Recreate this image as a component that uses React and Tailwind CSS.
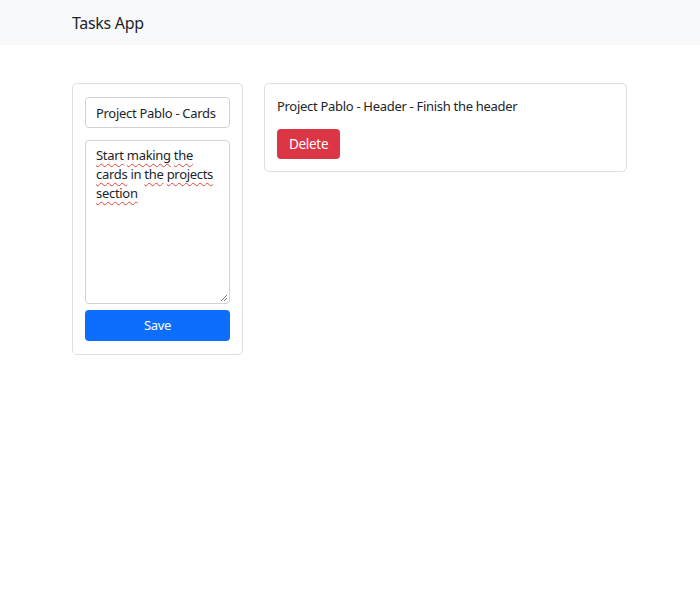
import React from 'react'

const squiggle = 'underline decoration-wavy decoration-[#e0453c] decoration-1 underline-offset-[3px] [text-decoration-skip-ink:none]'

const words = [
  ['Start', true], ['making', true], ['the', true],
  ['cards', true], ['in', false], ['the', true], ['projects', true],
  ['section', true],
]

const App = () => {
  return (
    <div className="min-h-[600px] bg-white text-[#212529] font-['Noto_Sans',sans-serif] tracking-[-0.3px]">
      <nav className="h-[45px] bg-[#f8f9fa] flex items-center pl-[72px]">
        <span className="text-[16px] leading-none">Tasks App</span>
      </nav>

      <main className="flex items-start gap-[21px] pl-[72px] pt-[38px]">
        <div className="w-[171px] border border-[#dfdfdf] rounded-[5px] px-3 pt-[13px] pb-[13px] flex flex-col">
          <input
            defaultValue="Project Pablo - Cards"
            className="h-[31px] w-full border border-[#ced4da] rounded-[4px] px-[10px] text-[13px] tracking-[-0.3px] text-[#212529] outline-none"
          />
          <div className="relative mt-3 h-[164px] border border-[#ced4da] rounded-[4px] px-[10px] pt-[5px] text-[13px] leading-[19px]">
            {words.map(([w, u], i) => (
              <React.Fragment key={i}>
                <span className={u ? squiggle : ''}>{w}</span>{' '}
              </React.Fragment>
            ))}
            <svg className="absolute right-[1px] bottom-[1px]" width="8" height="8" viewBox="0 0 8 8">
              <path d="M7 1 L1 7 M7 4 L4 7" stroke="#777" strokeWidth="1" />
            </svg>
          </div>
          <button className="mt-[6px] h-[31px] w-full bg-[#0d6efd] text-white text-[13px] rounded-[4px]">
            Save
          </button>
        </div>

        <div className="w-[363px] border border-[#dfdfdf] rounded-[5px] px-3 pt-[13px] pb-3">
          <p className="text-[13px] leading-[19px] mb-[13px]">Project Pablo - Header - Finish the header</p>
          <button className="h-[30px] px-[12px] bg-[#dc3545] text-white text-[13.5px] rounded-[4px]">
            Delete
          </button>
        </div>
      </main>
    </div>
  )
}

export default App
